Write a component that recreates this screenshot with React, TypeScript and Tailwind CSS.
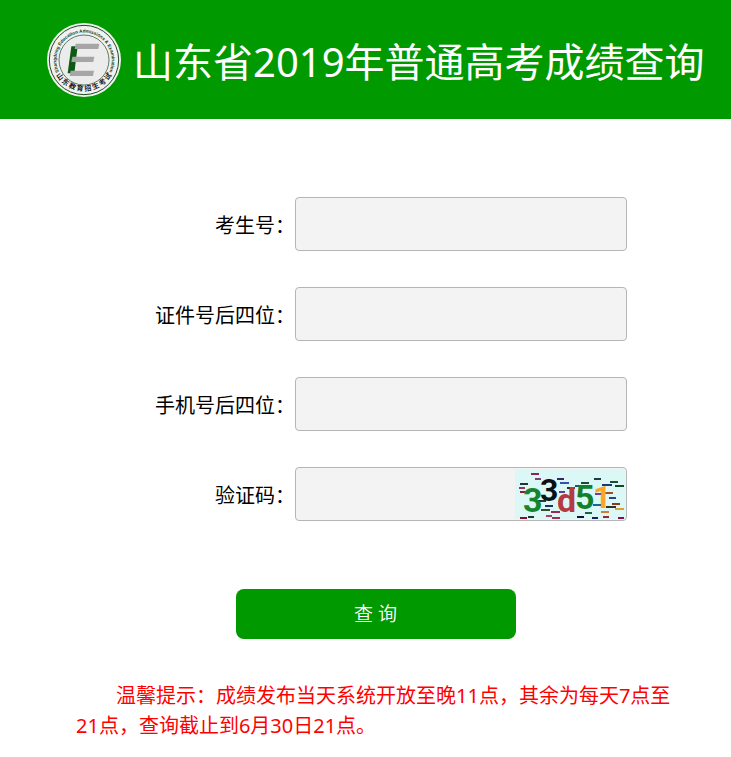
import React, { useState } from 'react';

/**
 * One labelled line of the query form.
 */
interface FieldRowProps {
  id: string;
  label: string;
  value: string;
  onChange: (value: string) => void;
  children?: React.ReactNode;
}

const FieldRow: React.FC<FieldRowProps> = ({ id, label, value, onChange, children }) => (
  <div className="flex items-center">
    <label htmlFor={id} className="w-[219px] shrink-0 pt-1 text-right text-xl">
      {label}
    </label>
    <div className="relative min-w-0 flex-1">
      <input
        id={id}
        type="text"
        value={value}
        onChange={(e) => onChange(e.target.value)}
        className="block h-[54px] w-full rounded border border-[#b5b5b5] bg-[#f3f3f3] px-3 text-xl outline-none"
      />
      {children}
    </div>
  </div>
);

// Round seal of the examination institute.
const SealLogo: React.FC = () => (
  <svg viewBox="0 0 222 222" className="size-[74px] shrink-0" role="img" aria-label="山东教育招生考试">
    <defs>
      <path id="seal-top" d="M 39 153 A 83 83 0 1 1 183 153" />
      <path id="seal-bottom" d="M 15 121 A 97 97 0 0 0 207 121" />
    </defs>
    <circle cx="111" cy="111" r="111" fill="#eef3ee" />
    <circle cx="111" cy="111" r="104" fill="#f1f1f1" stroke="#1f4a22" strokeWidth="3" />
    <circle cx="111" cy="111" r="75" fill="#ececec" stroke="#5d7d5f" strokeWidth="3" />
    <text className="font-['Liberation_Sans'] font-bold" fontSize="14" fill="#0e3d16">
      <textPath href="#seal-top" startOffset="50%" textAnchor="middle">
        Shangdong Education Admissions &amp; Examination
      </textPath>
    </text>
    <text className="font-['Noto_Sans_CJK_SC'] font-bold" fontSize="21" fill="#1a1a1a">
      <textPath href="#seal-bottom" startOffset="50%" textAnchor="middle">
        山 东 教 育 招 生 考 试
      </textPath>
    </text>
    <path d="M73 70 L92 70 L82 151 L62 151 Z" fill="#0d5a14" />
    <path d="M86 62 L157 62 L154 78 L83 78 Z" fill="#a6a6a6" />
    <path d="M76 101 L142 101 L139 117 L73 117 Z" fill="#a6a6a6" />
    <path d="M71 143 L141 143 L138 159 L68 159 Z" fill="#a6a6a6" />
  </svg>
);

// Short noise strokes of the captcha: [x, y, width, colour]
const noise: [number, number, number, string][] = [
  [16, 4, 8, '#8a2850'], [20, 9, 6, '#7a4080'], [5, 14, 8, '#1d3a30'], [4, 18, 6, '#a03060'],
  [5, 22, 6, '#8a2038'], [42, 9, 7, '#302860'], [45, 13, 9, '#3a50b0'], [52, 18, 8, '#183828'],
  [66, 13, 8, '#1a4a3a'], [60, 16, 7, '#2050a0'], [79, 9, 7, '#184040'], [87, 15, 10, '#203878'],
  [95, 12, 8, '#155030'], [100, 16, 9, '#104828'], [30, 36, 8, '#203060'], [26, 40, 9, '#305030'],
  [36, 42, 9, '#a02850'], [31, 46, 6, '#b04068'], [44, 22, 6, '#604090'], [80, 24, 8, '#6a40a0'],
  [90, 23, 8, '#a05020'], [94, 28, 7, '#304090'], [97, 34, 8, '#804020'], [100, 39, 9, '#e0a030'],
  [91, 37, 10, '#303030'], [78, 35, 8, '#2060a0'], [86, 42, 8, '#d08030'], [62, 47, 7, '#101040'],
  [5, 48, 7, '#900830'], [13, 47, 6, '#203828'], [77, 48, 6, '#182068'], [88, 47, 6, '#a02040'],
  [103, 48, 6, '#900850'], [37, 48, 8, '#a03050'], [23, 31, 8, '#204040'], [70, 43, 7, '#206040'],
];

const CaptchaImage: React.FC = () => (
  <svg viewBox="0 0 110 50" className="block h-[50px] w-[110px]">
    <rect width="110" height="50" fill="#dcf8f6" />
    {noise.map(([x, y, w, color], i) => (
      <rect key={i} x={x} y={y} width={w} height="2" fill={color} />
    ))}
    <g className="font-[Roboto,sans-serif] font-bold">
      <text x="8" y="43" fontSize="34" fill="#16862e">3</text>
      <text x="25" y="32" fontSize="32" fill="#0a1216">3</text>
      <text x="42" y="43" fontSize="34" fill="#b63a44">d</text>
      <text x="60" y="40" fontSize="34" fill="#12802a">5</text>
      <text x="78" y="39" fontSize="32" fill="#fba62a">1</text>
    </g>
  </svg>
);

const App: React.FC = () => {
  const [examNo, setExamNo] = useState('');
  const [idTail, setIdTail] = useState('');
  const [phoneTail, setPhoneTail] = useState('');
  const [code, setCode] = useState('');

  return (
    <div className="bg-white font-['Noto_Sans','Noto_Sans_CJK_SC',sans-serif] text-black" lang="zh-CN">
      <header className="flex h-[119px] items-center gap-3 bg-[#009900] pl-[47px]">
        <SealLogo />
        <h1 className="pt-1 text-[40px] font-normal whitespace-nowrap text-white">山东省2019年普通高考成绩查询</h1>
      </header>

      <main className="pt-[78px] pr-14 pb-4 pl-19">
        <form onSubmit={(e) => e.preventDefault()}>
          <div className="space-y-9 pr-12">
            <FieldRow id="exam-no" label="考生号：" value={examNo} onChange={setExamNo} />
            <FieldRow id="id-tail" label="证件号后四位：" value={idTail} onChange={setIdTail} />
            <FieldRow id="phone-tail" label="手机号后四位：" value={phoneTail} onChange={setPhoneTail} />
            <FieldRow id="code" label="验证码：" value={code} onChange={setCode}>
              <button type="button" aria-label="验证码" className="absolute top-0.5 right-0.5 cursor-pointer">
                <CaptchaImage />
              </button>
            </FieldRow>
          </div>
          <button
            type="submit"
            className="mx-auto mt-[68px] block h-[50px] w-[280px] rounded-lg bg-[#009900] text-[19px] font-[350] text-white"
          >
            查 询
          </button>
        </form>

        {/* Opening hours notice */}
        <p className="mt-[42px] indent-10 text-xl leading-[30px] text-[#ff0000]">
          温馨提示：成绩发布当天系统开放至晚11点，其余为每天7点至21点，查询截止到6月30日21点。
        </p>
      </main>
    </div>
  );
};

export default App;
